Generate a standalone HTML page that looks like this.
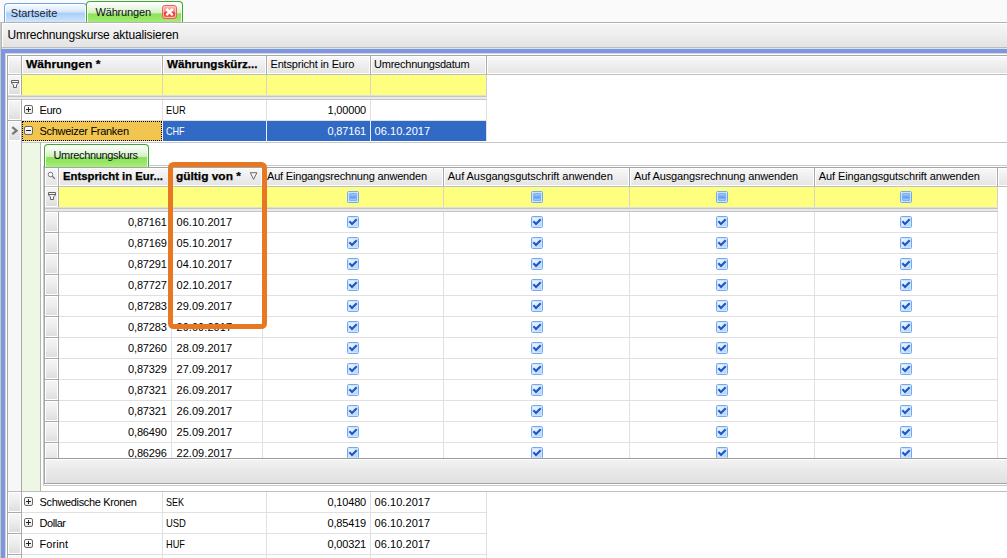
<!DOCTYPE html><html><head><meta charset="utf-8"><title>Währungen</title><style>
html,body{margin:0;padding:0}
body{width:1007px;height:558px;overflow:hidden;position:relative;background:#fff;font-family:"Liberation Sans",sans-serif;font-size:11px;color:#000}
div,span,svg{position:absolute;box-sizing:border-box}
.t{white-space:nowrap;line-height:16px;height:16px}
.b{font-weight:bold;-webkit-text-stroke:0.25px #000}
.big{font-size:12px}
.hd{background:linear-gradient(#f9f9f9 0%,#efefef 45%,#e4e4e4 100%);box-shadow:inset 0 0 0 1px #fff}
.ind{background:linear-gradient(#f6f6f6 0%,#ececec 50%,#dcdcdc 100%);box-shadow:inset 0 0 0 1px #fff}
.y{background:#ffff7f}
.ln{background:#e0e0e0}
.dk{background:#a9a9a9}
.ex{border:1px solid #6a6a6a;border-radius:2px;background:linear-gradient(#fff,#e8e8e8)}
.ex i{position:absolute;background:#222}
.cb{width:12px;height:12px;border:1px solid #70abf2;border-radius:1.5px;background:linear-gradient(135deg,#f6faff 0%,#dcebfd 45%,#a6cdf9 100%);box-shadow:inset 0 0 0 1px #cfe3fc}
</style></head><body>
<div class="" style="left:0px;top:0px;width:1007px;height:22px;background:#fafafa"></div>
<div class="" style="left:4px;top:3px;width:83px;height:20px;border:1px solid #6ea4e8;border-bottom:none;border-radius:4px 4px 0 0;background:linear-gradient(#f6faff 0%,#e3effc 30%,#cfe3fa 42%,#a9d0f8 50%,#b9d9f9 70%,#d6e9fc 100%);box-shadow:inset 1px 1px 0 rgba(255,255,255,.9),inset -1px 0 0 rgba(255,255,255,.9)"></div>
<span class="t " style="top:5px;left:10.8px;letter-spacing:0.003px;color:#1c2238;">Startseite</span>
<div class="" style="left:86px;top:1px;width:97px;height:22px;border:1px solid #3fa832;border-bottom:none;border-radius:4px 4px 0 0;background:linear-gradient(#ffffff 0%,#eef9e6 25%,#d3f0bf 52%,#8fe05a 57%,#98e868 80%,#a8f07e 100%);box-shadow:inset 1px 1px 0 rgba(255,255,255,.9),inset -1px 0 0 rgba(255,255,255,.8)"></div>
<span class="t " style="top:4px;left:95.5px;letter-spacing:-0.172px;color:#080c1c;">Währungen</span>
<svg style="left:162px;top:5px" width="15" height="14" viewBox="0 0 15 14"><defs><linearGradient id="rg" x1="0" y1="0" x2="0" y2="1"><stop offset="0" stop-color="#fbc4be"/><stop offset=".5" stop-color="#f4847c"/><stop offset=".56" stop-color="#e62a1c"/><stop offset="1" stop-color="#f6786c"/></linearGradient></defs><rect x=".5" y=".5" width="14" height="13" rx="2.5" fill="url(#rg)" stroke="#e8625a"/><rect x="1.5" y="1.5" width="12" height="11" rx="1.5" fill="none" stroke="#fbd0cb" stroke-opacity=".8"/><path d="M4.3 3.8 L10.7 10.2 M10.7 3.8 L4.3 10.2" stroke="#fff" stroke-width="2.4" stroke-linecap="butt"/></svg>
<div class="" style="left:1px;top:22px;width:1006px;height:27px;border-top:1px solid #b2b2b2;border-left:1px solid #b5b5b5;background:linear-gradient(#f6f6f6 0%,#ededed 50%,#e3e3e3 88%,#efefef 100%);box-shadow:inset 1px 1px 0 #fff"></div>
<div class="" style="left:0px;top:22px;width:1px;height:536px;background:#c9c9c9"></div>
<span class="t big" style="top:27px;left:7.5px;letter-spacing:-0.123px;">Umrechnungskurse aktualisieren</span>
<div class="" style="left:2px;top:47px;width:1005px;height:1px;background:#bcbcbc"></div>
<div class="" style="left:2px;top:48px;width:1005px;height:1px;background:#dfe2ee"></div>
<div class="" style="left:1px;top:49px;width:1006px;height:509px;background:#7b97e0"></div>
<div class="" style="left:5px;top:53px;width:1002px;height:505px;background:#d6d6d6"></div>
<div class="" style="left:6px;top:54px;width:1001px;height:504px;background:#fff"></div>
<div class="" style="left:7px;top:55px;width:1000px;height:503px;background:#a8a8a8"></div>
<div class="" style="left:8px;top:56px;width:999px;height:502px;background:#fff"></div>
<div class="hd" style="left:8px;top:56px;width:14px;height:18px;"></div>
<div class="hd" style="left:22px;top:56px;width:140px;height:18px;"></div>
<div class="hd" style="left:163px;top:56px;width:103px;height:18px;"></div>
<div class="hd" style="left:267px;top:56px;width:103px;height:18px;"></div>
<div class="hd" style="left:371px;top:56px;width:115px;height:18px;"></div>
<div class="hd" style="left:487px;top:56px;width:521px;height:18px;"></div>
<div class="dk" style="left:21px;top:56px;width:1px;height:19px;"></div>
<div class="dk" style="left:162px;top:56px;width:1px;height:19px;"></div>
<div class="dk" style="left:266px;top:56px;width:1px;height:19px;"></div>
<div class="dk" style="left:370px;top:56px;width:1px;height:19px;"></div>
<div class="dk" style="left:486px;top:56px;width:1px;height:19px;"></div>
<div class="" style="left:8px;top:74px;width:999px;height:1px;background:#bebebe"></div>
<span class="t b" style="top:56px;left:26px;transform:scaleX(1.0956);transform-origin:left center;">Währungen *</span>
<span class="t b" style="top:56px;left:167px;transform:scaleX(1.0581);transform-origin:left center;">Währungskürz...</span>
<span class="t " style="top:56px;left:270.5px;letter-spacing:-0.172px;">Entspricht in Euro</span>
<span class="t " style="top:56px;left:374px;letter-spacing:-0.230px;">Umrechnungsdatum</span>
<div class="ind" style="left:8px;top:75px;width:13px;height:20px;"></div>
<div class="dk" style="left:21px;top:75px;width:1px;height:20px;"></div>
<div class="y" style="left:22px;top:75px;width:464px;height:20px;"></div>
<div class="" style="left:162px;top:75px;width:1px;height:20px;background:#d6d6c4"></div>
<div class="" style="left:266px;top:75px;width:1px;height:20px;background:#d6d6c4"></div>
<div class="" style="left:370px;top:75px;width:1px;height:20px;background:#d6d6c4"></div>
<div class="" style="left:486px;top:75px;width:1px;height:20px;background:#d0d0d0"></div>
<svg style="left:11px;top:80px" width="8" height="9" viewBox="0 0 8 9"><path d="M.5 .5 H7.5 V3 L5.5 5 V7.5 H2.5 V5 L.5 3 Z" fill="#f6f6f6" stroke="#636363" stroke-width="1"/><path d="M1 2.5H7" stroke="#636363" stroke-width="1"/></svg>
<div class="" style="left:8px;top:95px;width:479px;height:5px;background:linear-gradient(#dedede 0,#dedede 1px,#c4c4c4 1px,#c4c4c4 2px,#eaeaea 2px,#eaeaea 4px,#c4c4c4 4px,#c4c4c4 5px)"></div>
<div class="ind" style="left:8px;top:100px;width:13px;height:20px;"></div>
<div class="dk" style="left:21px;top:99px;width:1px;height:22px;"></div>
<div class="dk" style="left:8px;top:120px;width:13px;height:1px;"></div>
<div class="ln" style="left:162px;top:100px;width:1px;height:21px;"></div>
<div class="ln" style="left:266px;top:100px;width:1px;height:21px;"></div>
<div class="ln" style="left:370px;top:100px;width:1px;height:21px;"></div>
<div class="ln" style="left:486px;top:100px;width:1px;height:21px;"></div>
<div class="ln" style="left:22px;top:120px;width:465px;height:1px;"></div>
<div class="ex" style="left:24px;top:105px;width:9px;height:9px"><i style="left:1px;top:3px;width:5px;height:1px"></i><i style="left:3px;top:1px;width:1px;height:5px"></i></div>
<span class="t " style="top:102px;left:39.5px;letter-spacing:-0.345px;">Euro</span>
<span class="t " style="top:102px;left:166px;transform:scaleX(0.8478);transform-origin:left center;">EUR</span>
<span class="t " style="top:102px;right:640.9789999999999px;letter-spacing:-0.179px;">1,00000</span>
<div class="ind" style="left:8px;top:121px;width:13px;height:20px;"></div>
<div class="dk" style="left:21px;top:120px;width:1px;height:22px;"></div>
<div class="dk" style="left:8px;top:141px;width:13px;height:1px;"></div>
<div class="" style="left:22px;top:121px;width:140px;height:20px;background:#f2c54f;border:1px dotted #000"></div>
<div class="" style="left:162px;top:121px;width:1px;height:20px;background:#f4f4f4"></div>
<div class="" style="left:163px;top:121px;width:323px;height:20px;background:#316ac5"></div>
<div class="" style="left:266px;top:121px;width:1px;height:20px;background:#e8eefc"></div>
<div class="" style="left:370px;top:121px;width:1px;height:20px;background:#e8eefc"></div>
<div class="ln" style="left:486px;top:121px;width:1px;height:20px;"></div>
<div class="ex" style="left:24px;top:126px;width:9px;height:9px"><i style="left:1px;top:3px;width:5px;height:1px"></i></div>
<span class="t " style="top:123px;left:39.5px;letter-spacing:-0.291px;">Schweizer Franken</span>
<span class="t " style="top:123px;left:166px;transform:scaleX(0.8261);transform-origin:left center;color:#fff;">CHF</span>
<span class="t " style="top:123px;right:640.9789999999999px;letter-spacing:-0.179px;color:#fff;">0,87161</span>
<span class="t " style="top:123px;left:374.6px;letter-spacing:0.049px;color:#fff;">06.10.2017</span>
<svg style="left:11px;top:126px" width="8" height="10" viewBox="0 0 8 10"><path d="M1.3 1.2 L5.6 4.7 L1.3 8.2" fill="none" stroke="#777" stroke-width="2.2"/></svg>
<div class="" style="left:8px;top:141px;width:13px;height:350px;background:#f7f7f7"></div>
<div class="dk" style="left:21px;top:141px;width:1px;height:350px;"></div>
<div class="" style="left:22px;top:141px;width:18px;height:350px;background:#eef7e3"></div>
<div class="" style="left:22px;top:142px;width:985px;height:1px;background:#c6c6c6"></div>
<div class="" style="left:40px;top:142px;width:1px;height:349px;background:#b4b4b4"></div>
<div class="" style="left:8px;top:491px;width:999px;height:1px;background:#bdbdbd"></div>
<div class="" style="left:44px;top:144px;width:105px;height:23px;border:1px solid #3fa832;border-bottom:none;border-radius:4px 4px 0 0;background:linear-gradient(#ffffff 0%,#eef9e6 25%,#d3f0bf 52%,#8fe05a 57%,#98e868 80%,#a8f07e 100%);box-shadow:inset 1px 1px 0 rgba(255,255,255,.9),inset -1px 0 0 rgba(255,255,255,.8)"></div>
<span class="t " style="top:146.5px;left:53.5px;letter-spacing:-0.341px;color:#080c1c;">Umrechnungskurs</span>
<div class="" style="left:149px;top:165px;width:858px;height:1px;background:#c9c9c9"></div>
<div class="" style="left:43px;top:166px;width:1px;height:320px;background:#c9c9c9"></div>
<div class="" style="left:43px;top:485px;width:964px;height:1px;background:#c9c9c9"></div>
<div class="" style="left:44px;top:167px;width:963px;height:317px;border:1px solid #a5a5a5;border-right:none;background:#fff"></div>
<div class="hd" style="left:45px;top:168px;width:13px;height:18px;"></div>
<div class="hd" style="left:59px;top:168px;width:112px;height:18px;"></div>
<div class="hd" style="left:172px;top:168px;width:90px;height:18px;"></div>
<div class="hd" style="left:263px;top:168px;width:180px;height:18px;"></div>
<div class="hd" style="left:444px;top:168px;width:185px;height:18px;"></div>
<div class="hd" style="left:630px;top:168px;width:184px;height:18px;"></div>
<div class="hd" style="left:815px;top:168px;width:182px;height:18px;"></div>
<div class="hd" style="left:998px;top:168px;width:10px;height:18px;"></div>
<div class="dk" style="left:58px;top:168px;width:1px;height:19px;"></div>
<div class="dk" style="left:171px;top:168px;width:1px;height:19px;"></div>
<div class="dk" style="left:262px;top:168px;width:1px;height:19px;"></div>
<div class="dk" style="left:443px;top:168px;width:1px;height:19px;"></div>
<div class="dk" style="left:629px;top:168px;width:1px;height:19px;"></div>
<div class="dk" style="left:814px;top:168px;width:1px;height:19px;"></div>
<div class="dk" style="left:997px;top:168px;width:1px;height:19px;"></div>
<div class="" style="left:45px;top:186px;width:962px;height:1px;background:#bebebe"></div>
<svg style="left:47px;top:171px" width="10" height="10" viewBox="0 0 10 10"><circle cx="3.5" cy="3.5" r="2.3" fill="#fbfbfb" stroke="#7a7a7a" stroke-width="1"/><path d="M5.2 5.2 L7.8 7.8" stroke="#7a7a7a" stroke-width="1.4"/></svg>
<span class="t b" style="top:168px;left:63px;transform:scaleX(1.0289);transform-origin:left center;">Entspricht in Eur...</span>
<span class="t b" style="top:168px;left:176px;transform:scaleX(1.0833);transform-origin:left center;">gültig von *</span>
<svg style="left:249px;top:172px" width="9" height="9" viewBox="0 0 9 9"><path d="M1.3 .7 H7.9 L4.6 7.4 Z" fill="#f4f4f4" stroke="#6c6c6c" stroke-width="1"/></svg>
<span class="t " style="top:168px;left:267px;letter-spacing:-0.183px;">Auf Eingangsrechnung anwenden</span>
<span class="t " style="top:168px;left:447.8px;letter-spacing:-0.045px;">Auf Ausgangsgutschrift anwenden</span>
<span class="t " style="top:168px;left:634px;letter-spacing:-0.121px;">Auf Ausgangsrechnung anwenden</span>
<span class="t " style="top:168px;left:818.8px;letter-spacing:-0.097px;">Auf Eingangsgutschrift anwenden</span>
<div class="ind" style="left:45px;top:187px;width:13px;height:20px;"></div>
<div class="dk" style="left:58px;top:187px;width:1px;height:20px;"></div>
<div class="y" style="left:59px;top:187px;width:938px;height:20px;"></div>
<div class="" style="left:171px;top:187px;width:1px;height:20px;background:#d6d6c4"></div>
<div class="" style="left:262px;top:187px;width:1px;height:20px;background:#d6d6c4"></div>
<div class="" style="left:443px;top:187px;width:1px;height:20px;background:#d6d6c4"></div>
<div class="" style="left:629px;top:187px;width:1px;height:20px;background:#d6d6c4"></div>
<div class="" style="left:814px;top:187px;width:1px;height:20px;background:#d6d6c4"></div>
<div class="" style="left:997px;top:187px;width:1px;height:20px;background:#d0d0d0"></div>
<svg style="left:48px;top:192px" width="8" height="9" viewBox="0 0 8 9"><path d="M.5 .5 H7.5 V3 L5.5 5 V7.5 H2.5 V5 L.5 3 Z" fill="#f6f6f6" stroke="#636363" stroke-width="1"/><path d="M1 2.5H7" stroke="#636363" stroke-width="1"/></svg>
<div class="cb" style="left:347px;top:191px"><div style="left:1px;top:1px;width:8px;height:8px;border-radius:1px;background:linear-gradient(#a4cbfa 0%,#6ea6f5 45%,#5f9bf3 55%,#a8cefb 100%);border:1px solid #7bb0f4"></div></div>
<div class="cb" style="left:531px;top:191px"><div style="left:1px;top:1px;width:8px;height:8px;border-radius:1px;background:linear-gradient(#a4cbfa 0%,#6ea6f5 45%,#5f9bf3 55%,#a8cefb 100%);border:1px solid #7bb0f4"></div></div>
<div class="cb" style="left:716px;top:191px"><div style="left:1px;top:1px;width:8px;height:8px;border-radius:1px;background:linear-gradient(#a4cbfa 0%,#6ea6f5 45%,#5f9bf3 55%,#a8cefb 100%);border:1px solid #7bb0f4"></div></div>
<div class="cb" style="left:900px;top:191px"><div style="left:1px;top:1px;width:8px;height:8px;border-radius:1px;background:linear-gradient(#a4cbfa 0%,#6ea6f5 45%,#5f9bf3 55%,#a8cefb 100%);border:1px solid #7bb0f4"></div></div>
<div class="" style="left:45px;top:207px;width:953px;height:5px;background:linear-gradient(#dedede 0,#dedede 1px,#c4c4c4 1px,#c4c4c4 2px,#eaeaea 2px,#eaeaea 4px,#c4c4c4 4px,#c4c4c4 5px)"></div>
<div style="left:45px;top:212px;width:962px;height:246px;overflow:hidden">
<div class="ind" style="left:0px;top:0px;width:13px;height:20px;"></div>
<div class="dk" style="left:13px;top:-1px;width:1px;height:22px;"></div>
<div class="dk" style="left:0px;top:20px;width:13px;height:1px;"></div>
<div class="ln" style="left:14px;top:20px;width:939px;height:1px;"></div>
<div class="ln" style="left:126px;top:0px;width:1px;height:21px;"></div>
<div class="ln" style="left:217px;top:0px;width:1px;height:21px;"></div>
<div class="ln" style="left:398px;top:0px;width:1px;height:21px;"></div>
<div class="ln" style="left:584px;top:0px;width:1px;height:21px;"></div>
<div class="ln" style="left:769px;top:0px;width:1px;height:21px;"></div>
<div class="ln" style="left:952px;top:0px;width:1px;height:21px;"></div>
<div class="ind" style="left:0px;top:21px;width:13px;height:20px;"></div>
<div class="dk" style="left:13px;top:20px;width:1px;height:22px;"></div>
<div class="dk" style="left:0px;top:41px;width:13px;height:1px;"></div>
<div class="ln" style="left:14px;top:41px;width:939px;height:1px;"></div>
<div class="ln" style="left:126px;top:21px;width:1px;height:21px;"></div>
<div class="ln" style="left:217px;top:21px;width:1px;height:21px;"></div>
<div class="ln" style="left:398px;top:21px;width:1px;height:21px;"></div>
<div class="ln" style="left:584px;top:21px;width:1px;height:21px;"></div>
<div class="ln" style="left:769px;top:21px;width:1px;height:21px;"></div>
<div class="ln" style="left:952px;top:21px;width:1px;height:21px;"></div>
<div class="ind" style="left:0px;top:42px;width:13px;height:20px;"></div>
<div class="dk" style="left:13px;top:41px;width:1px;height:22px;"></div>
<div class="dk" style="left:0px;top:62px;width:13px;height:1px;"></div>
<div class="ln" style="left:14px;top:62px;width:939px;height:1px;"></div>
<div class="ln" style="left:126px;top:42px;width:1px;height:21px;"></div>
<div class="ln" style="left:217px;top:42px;width:1px;height:21px;"></div>
<div class="ln" style="left:398px;top:42px;width:1px;height:21px;"></div>
<div class="ln" style="left:584px;top:42px;width:1px;height:21px;"></div>
<div class="ln" style="left:769px;top:42px;width:1px;height:21px;"></div>
<div class="ln" style="left:952px;top:42px;width:1px;height:21px;"></div>
<div class="ind" style="left:0px;top:63px;width:13px;height:20px;"></div>
<div class="dk" style="left:13px;top:62px;width:1px;height:22px;"></div>
<div class="dk" style="left:0px;top:83px;width:13px;height:1px;"></div>
<div class="ln" style="left:14px;top:83px;width:939px;height:1px;"></div>
<div class="ln" style="left:126px;top:63px;width:1px;height:21px;"></div>
<div class="ln" style="left:217px;top:63px;width:1px;height:21px;"></div>
<div class="ln" style="left:398px;top:63px;width:1px;height:21px;"></div>
<div class="ln" style="left:584px;top:63px;width:1px;height:21px;"></div>
<div class="ln" style="left:769px;top:63px;width:1px;height:21px;"></div>
<div class="ln" style="left:952px;top:63px;width:1px;height:21px;"></div>
<div class="ind" style="left:0px;top:84px;width:13px;height:20px;"></div>
<div class="dk" style="left:13px;top:83px;width:1px;height:22px;"></div>
<div class="dk" style="left:0px;top:104px;width:13px;height:1px;"></div>
<div class="ln" style="left:14px;top:104px;width:939px;height:1px;"></div>
<div class="ln" style="left:126px;top:84px;width:1px;height:21px;"></div>
<div class="ln" style="left:217px;top:84px;width:1px;height:21px;"></div>
<div class="ln" style="left:398px;top:84px;width:1px;height:21px;"></div>
<div class="ln" style="left:584px;top:84px;width:1px;height:21px;"></div>
<div class="ln" style="left:769px;top:84px;width:1px;height:21px;"></div>
<div class="ln" style="left:952px;top:84px;width:1px;height:21px;"></div>
<div class="ind" style="left:0px;top:105px;width:13px;height:20px;"></div>
<div class="dk" style="left:13px;top:104px;width:1px;height:22px;"></div>
<div class="dk" style="left:0px;top:125px;width:13px;height:1px;"></div>
<div class="ln" style="left:14px;top:125px;width:939px;height:1px;"></div>
<div class="ln" style="left:126px;top:105px;width:1px;height:21px;"></div>
<div class="ln" style="left:217px;top:105px;width:1px;height:21px;"></div>
<div class="ln" style="left:398px;top:105px;width:1px;height:21px;"></div>
<div class="ln" style="left:584px;top:105px;width:1px;height:21px;"></div>
<div class="ln" style="left:769px;top:105px;width:1px;height:21px;"></div>
<div class="ln" style="left:952px;top:105px;width:1px;height:21px;"></div>
<div class="ind" style="left:0px;top:126px;width:13px;height:20px;"></div>
<div class="dk" style="left:13px;top:125px;width:1px;height:22px;"></div>
<div class="dk" style="left:0px;top:146px;width:13px;height:1px;"></div>
<div class="ln" style="left:14px;top:146px;width:939px;height:1px;"></div>
<div class="ln" style="left:126px;top:126px;width:1px;height:21px;"></div>
<div class="ln" style="left:217px;top:126px;width:1px;height:21px;"></div>
<div class="ln" style="left:398px;top:126px;width:1px;height:21px;"></div>
<div class="ln" style="left:584px;top:126px;width:1px;height:21px;"></div>
<div class="ln" style="left:769px;top:126px;width:1px;height:21px;"></div>
<div class="ln" style="left:952px;top:126px;width:1px;height:21px;"></div>
<div class="ind" style="left:0px;top:147px;width:13px;height:20px;"></div>
<div class="dk" style="left:13px;top:146px;width:1px;height:22px;"></div>
<div class="dk" style="left:0px;top:167px;width:13px;height:1px;"></div>
<div class="ln" style="left:14px;top:167px;width:939px;height:1px;"></div>
<div class="ln" style="left:126px;top:147px;width:1px;height:21px;"></div>
<div class="ln" style="left:217px;top:147px;width:1px;height:21px;"></div>
<div class="ln" style="left:398px;top:147px;width:1px;height:21px;"></div>
<div class="ln" style="left:584px;top:147px;width:1px;height:21px;"></div>
<div class="ln" style="left:769px;top:147px;width:1px;height:21px;"></div>
<div class="ln" style="left:952px;top:147px;width:1px;height:21px;"></div>
<div class="ind" style="left:0px;top:168px;width:13px;height:20px;"></div>
<div class="dk" style="left:13px;top:167px;width:1px;height:22px;"></div>
<div class="dk" style="left:0px;top:188px;width:13px;height:1px;"></div>
<div class="ln" style="left:14px;top:188px;width:939px;height:1px;"></div>
<div class="ln" style="left:126px;top:168px;width:1px;height:21px;"></div>
<div class="ln" style="left:217px;top:168px;width:1px;height:21px;"></div>
<div class="ln" style="left:398px;top:168px;width:1px;height:21px;"></div>
<div class="ln" style="left:584px;top:168px;width:1px;height:21px;"></div>
<div class="ln" style="left:769px;top:168px;width:1px;height:21px;"></div>
<div class="ln" style="left:952px;top:168px;width:1px;height:21px;"></div>
<div class="ind" style="left:0px;top:189px;width:13px;height:20px;"></div>
<div class="dk" style="left:13px;top:188px;width:1px;height:22px;"></div>
<div class="dk" style="left:0px;top:209px;width:13px;height:1px;"></div>
<div class="ln" style="left:14px;top:209px;width:939px;height:1px;"></div>
<div class="ln" style="left:126px;top:189px;width:1px;height:21px;"></div>
<div class="ln" style="left:217px;top:189px;width:1px;height:21px;"></div>
<div class="ln" style="left:398px;top:189px;width:1px;height:21px;"></div>
<div class="ln" style="left:584px;top:189px;width:1px;height:21px;"></div>
<div class="ln" style="left:769px;top:189px;width:1px;height:21px;"></div>
<div class="ln" style="left:952px;top:189px;width:1px;height:21px;"></div>
<div class="ind" style="left:0px;top:210px;width:13px;height:20px;"></div>
<div class="dk" style="left:13px;top:209px;width:1px;height:22px;"></div>
<div class="dk" style="left:0px;top:230px;width:13px;height:1px;"></div>
<div class="ln" style="left:14px;top:230px;width:939px;height:1px;"></div>
<div class="ln" style="left:126px;top:210px;width:1px;height:21px;"></div>
<div class="ln" style="left:217px;top:210px;width:1px;height:21px;"></div>
<div class="ln" style="left:398px;top:210px;width:1px;height:21px;"></div>
<div class="ln" style="left:584px;top:210px;width:1px;height:21px;"></div>
<div class="ln" style="left:769px;top:210px;width:1px;height:21px;"></div>
<div class="ln" style="left:952px;top:210px;width:1px;height:21px;"></div>
<div class="ind" style="left:0px;top:231px;width:13px;height:20px;"></div>
<div class="dk" style="left:13px;top:230px;width:1px;height:22px;"></div>
<div class="dk" style="left:0px;top:251px;width:13px;height:1px;"></div>
<div class="ln" style="left:14px;top:251px;width:939px;height:1px;"></div>
<div class="ln" style="left:126px;top:231px;width:1px;height:21px;"></div>
<div class="ln" style="left:217px;top:231px;width:1px;height:21px;"></div>
<div class="ln" style="left:398px;top:231px;width:1px;height:21px;"></div>
<div class="ln" style="left:584px;top:231px;width:1px;height:21px;"></div>
<div class="ln" style="left:769px;top:231px;width:1px;height:21px;"></div>
<div class="ln" style="left:952px;top:231px;width:1px;height:21px;"></div>
</div>
<div style="left:0;top:0;width:1007px;height:458px;overflow:hidden">
<span class="t " style="top:214px;right:840.379px;letter-spacing:-0.179px;">0,87161</span>
<span class="t " style="top:214px;left:176.5px;letter-spacing:0.049px;">06.10.2017</span>
<div class="cb" style="left:347px;top:216px"><svg style="left:0;top:0" width="10" height="10" viewBox="0 0 10 10"><path d="M1.4 4.3 L4 6.9 L8.7 2.2" fill="none" stroke="#1e56c8" stroke-width="2.1"/></svg></div>
<div class="cb" style="left:531px;top:216px"><svg style="left:0;top:0" width="10" height="10" viewBox="0 0 10 10"><path d="M1.4 4.3 L4 6.9 L8.7 2.2" fill="none" stroke="#1e56c8" stroke-width="2.1"/></svg></div>
<div class="cb" style="left:716px;top:216px"><svg style="left:0;top:0" width="10" height="10" viewBox="0 0 10 10"><path d="M1.4 4.3 L4 6.9 L8.7 2.2" fill="none" stroke="#1e56c8" stroke-width="2.1"/></svg></div>
<div class="cb" style="left:900px;top:216px"><svg style="left:0;top:0" width="10" height="10" viewBox="0 0 10 10"><path d="M1.4 4.3 L4 6.9 L8.7 2.2" fill="none" stroke="#1e56c8" stroke-width="2.1"/></svg></div>
<span class="t " style="top:235px;right:840.379px;letter-spacing:-0.179px;">0,87169</span>
<span class="t " style="top:235px;left:176.5px;letter-spacing:0.049px;">05.10.2017</span>
<div class="cb" style="left:347px;top:237px"><svg style="left:0;top:0" width="10" height="10" viewBox="0 0 10 10"><path d="M1.4 4.3 L4 6.9 L8.7 2.2" fill="none" stroke="#1e56c8" stroke-width="2.1"/></svg></div>
<div class="cb" style="left:531px;top:237px"><svg style="left:0;top:0" width="10" height="10" viewBox="0 0 10 10"><path d="M1.4 4.3 L4 6.9 L8.7 2.2" fill="none" stroke="#1e56c8" stroke-width="2.1"/></svg></div>
<div class="cb" style="left:716px;top:237px"><svg style="left:0;top:0" width="10" height="10" viewBox="0 0 10 10"><path d="M1.4 4.3 L4 6.9 L8.7 2.2" fill="none" stroke="#1e56c8" stroke-width="2.1"/></svg></div>
<div class="cb" style="left:900px;top:237px"><svg style="left:0;top:0" width="10" height="10" viewBox="0 0 10 10"><path d="M1.4 4.3 L4 6.9 L8.7 2.2" fill="none" stroke="#1e56c8" stroke-width="2.1"/></svg></div>
<span class="t " style="top:256px;right:840.379px;letter-spacing:-0.179px;">0,87291</span>
<span class="t " style="top:256px;left:176.5px;letter-spacing:0.049px;">04.10.2017</span>
<div class="cb" style="left:347px;top:258px"><svg style="left:0;top:0" width="10" height="10" viewBox="0 0 10 10"><path d="M1.4 4.3 L4 6.9 L8.7 2.2" fill="none" stroke="#1e56c8" stroke-width="2.1"/></svg></div>
<div class="cb" style="left:531px;top:258px"><svg style="left:0;top:0" width="10" height="10" viewBox="0 0 10 10"><path d="M1.4 4.3 L4 6.9 L8.7 2.2" fill="none" stroke="#1e56c8" stroke-width="2.1"/></svg></div>
<div class="cb" style="left:716px;top:258px"><svg style="left:0;top:0" width="10" height="10" viewBox="0 0 10 10"><path d="M1.4 4.3 L4 6.9 L8.7 2.2" fill="none" stroke="#1e56c8" stroke-width="2.1"/></svg></div>
<div class="cb" style="left:900px;top:258px"><svg style="left:0;top:0" width="10" height="10" viewBox="0 0 10 10"><path d="M1.4 4.3 L4 6.9 L8.7 2.2" fill="none" stroke="#1e56c8" stroke-width="2.1"/></svg></div>
<span class="t " style="top:277px;right:840.379px;letter-spacing:-0.179px;">0,87727</span>
<span class="t " style="top:277px;left:176.5px;letter-spacing:0.049px;">02.10.2017</span>
<div class="cb" style="left:347px;top:279px"><svg style="left:0;top:0" width="10" height="10" viewBox="0 0 10 10"><path d="M1.4 4.3 L4 6.9 L8.7 2.2" fill="none" stroke="#1e56c8" stroke-width="2.1"/></svg></div>
<div class="cb" style="left:531px;top:279px"><svg style="left:0;top:0" width="10" height="10" viewBox="0 0 10 10"><path d="M1.4 4.3 L4 6.9 L8.7 2.2" fill="none" stroke="#1e56c8" stroke-width="2.1"/></svg></div>
<div class="cb" style="left:716px;top:279px"><svg style="left:0;top:0" width="10" height="10" viewBox="0 0 10 10"><path d="M1.4 4.3 L4 6.9 L8.7 2.2" fill="none" stroke="#1e56c8" stroke-width="2.1"/></svg></div>
<div class="cb" style="left:900px;top:279px"><svg style="left:0;top:0" width="10" height="10" viewBox="0 0 10 10"><path d="M1.4 4.3 L4 6.9 L8.7 2.2" fill="none" stroke="#1e56c8" stroke-width="2.1"/></svg></div>
<span class="t " style="top:298px;right:840.379px;letter-spacing:-0.179px;">0,87283</span>
<span class="t " style="top:298px;left:176.5px;letter-spacing:0.049px;">29.09.2017</span>
<div class="cb" style="left:347px;top:300px"><svg style="left:0;top:0" width="10" height="10" viewBox="0 0 10 10"><path d="M1.4 4.3 L4 6.9 L8.7 2.2" fill="none" stroke="#1e56c8" stroke-width="2.1"/></svg></div>
<div class="cb" style="left:531px;top:300px"><svg style="left:0;top:0" width="10" height="10" viewBox="0 0 10 10"><path d="M1.4 4.3 L4 6.9 L8.7 2.2" fill="none" stroke="#1e56c8" stroke-width="2.1"/></svg></div>
<div class="cb" style="left:716px;top:300px"><svg style="left:0;top:0" width="10" height="10" viewBox="0 0 10 10"><path d="M1.4 4.3 L4 6.9 L8.7 2.2" fill="none" stroke="#1e56c8" stroke-width="2.1"/></svg></div>
<div class="cb" style="left:900px;top:300px"><svg style="left:0;top:0" width="10" height="10" viewBox="0 0 10 10"><path d="M1.4 4.3 L4 6.9 L8.7 2.2" fill="none" stroke="#1e56c8" stroke-width="2.1"/></svg></div>
<span class="t " style="top:319px;right:840.379px;letter-spacing:-0.179px;">0,87283</span>
<span class="t " style="top:319px;left:176.5px;letter-spacing:0.049px;">29.09.2017</span>
<div class="cb" style="left:347px;top:321px"><svg style="left:0;top:0" width="10" height="10" viewBox="0 0 10 10"><path d="M1.4 4.3 L4 6.9 L8.7 2.2" fill="none" stroke="#1e56c8" stroke-width="2.1"/></svg></div>
<div class="cb" style="left:531px;top:321px"><svg style="left:0;top:0" width="10" height="10" viewBox="0 0 10 10"><path d="M1.4 4.3 L4 6.9 L8.7 2.2" fill="none" stroke="#1e56c8" stroke-width="2.1"/></svg></div>
<div class="cb" style="left:716px;top:321px"><svg style="left:0;top:0" width="10" height="10" viewBox="0 0 10 10"><path d="M1.4 4.3 L4 6.9 L8.7 2.2" fill="none" stroke="#1e56c8" stroke-width="2.1"/></svg></div>
<div class="cb" style="left:900px;top:321px"><svg style="left:0;top:0" width="10" height="10" viewBox="0 0 10 10"><path d="M1.4 4.3 L4 6.9 L8.7 2.2" fill="none" stroke="#1e56c8" stroke-width="2.1"/></svg></div>
<span class="t " style="top:340px;right:840.379px;letter-spacing:-0.179px;">0,87260</span>
<span class="t " style="top:340px;left:176.5px;letter-spacing:0.049px;">28.09.2017</span>
<div class="cb" style="left:347px;top:342px"><svg style="left:0;top:0" width="10" height="10" viewBox="0 0 10 10"><path d="M1.4 4.3 L4 6.9 L8.7 2.2" fill="none" stroke="#1e56c8" stroke-width="2.1"/></svg></div>
<div class="cb" style="left:531px;top:342px"><svg style="left:0;top:0" width="10" height="10" viewBox="0 0 10 10"><path d="M1.4 4.3 L4 6.9 L8.7 2.2" fill="none" stroke="#1e56c8" stroke-width="2.1"/></svg></div>
<div class="cb" style="left:716px;top:342px"><svg style="left:0;top:0" width="10" height="10" viewBox="0 0 10 10"><path d="M1.4 4.3 L4 6.9 L8.7 2.2" fill="none" stroke="#1e56c8" stroke-width="2.1"/></svg></div>
<div class="cb" style="left:900px;top:342px"><svg style="left:0;top:0" width="10" height="10" viewBox="0 0 10 10"><path d="M1.4 4.3 L4 6.9 L8.7 2.2" fill="none" stroke="#1e56c8" stroke-width="2.1"/></svg></div>
<span class="t " style="top:361px;right:840.379px;letter-spacing:-0.179px;">0,87329</span>
<span class="t " style="top:361px;left:176.5px;letter-spacing:0.049px;">27.09.2017</span>
<div class="cb" style="left:347px;top:363px"><svg style="left:0;top:0" width="10" height="10" viewBox="0 0 10 10"><path d="M1.4 4.3 L4 6.9 L8.7 2.2" fill="none" stroke="#1e56c8" stroke-width="2.1"/></svg></div>
<div class="cb" style="left:531px;top:363px"><svg style="left:0;top:0" width="10" height="10" viewBox="0 0 10 10"><path d="M1.4 4.3 L4 6.9 L8.7 2.2" fill="none" stroke="#1e56c8" stroke-width="2.1"/></svg></div>
<div class="cb" style="left:716px;top:363px"><svg style="left:0;top:0" width="10" height="10" viewBox="0 0 10 10"><path d="M1.4 4.3 L4 6.9 L8.7 2.2" fill="none" stroke="#1e56c8" stroke-width="2.1"/></svg></div>
<div class="cb" style="left:900px;top:363px"><svg style="left:0;top:0" width="10" height="10" viewBox="0 0 10 10"><path d="M1.4 4.3 L4 6.9 L8.7 2.2" fill="none" stroke="#1e56c8" stroke-width="2.1"/></svg></div>
<span class="t " style="top:382px;right:840.379px;letter-spacing:-0.179px;">0,87321</span>
<span class="t " style="top:382px;left:176.5px;letter-spacing:0.049px;">26.09.2017</span>
<div class="cb" style="left:347px;top:384px"><svg style="left:0;top:0" width="10" height="10" viewBox="0 0 10 10"><path d="M1.4 4.3 L4 6.9 L8.7 2.2" fill="none" stroke="#1e56c8" stroke-width="2.1"/></svg></div>
<div class="cb" style="left:531px;top:384px"><svg style="left:0;top:0" width="10" height="10" viewBox="0 0 10 10"><path d="M1.4 4.3 L4 6.9 L8.7 2.2" fill="none" stroke="#1e56c8" stroke-width="2.1"/></svg></div>
<div class="cb" style="left:716px;top:384px"><svg style="left:0;top:0" width="10" height="10" viewBox="0 0 10 10"><path d="M1.4 4.3 L4 6.9 L8.7 2.2" fill="none" stroke="#1e56c8" stroke-width="2.1"/></svg></div>
<div class="cb" style="left:900px;top:384px"><svg style="left:0;top:0" width="10" height="10" viewBox="0 0 10 10"><path d="M1.4 4.3 L4 6.9 L8.7 2.2" fill="none" stroke="#1e56c8" stroke-width="2.1"/></svg></div>
<span class="t " style="top:403px;right:840.379px;letter-spacing:-0.179px;">0,87321</span>
<span class="t " style="top:403px;left:176.5px;letter-spacing:0.049px;">26.09.2017</span>
<div class="cb" style="left:347px;top:405px"><svg style="left:0;top:0" width="10" height="10" viewBox="0 0 10 10"><path d="M1.4 4.3 L4 6.9 L8.7 2.2" fill="none" stroke="#1e56c8" stroke-width="2.1"/></svg></div>
<div class="cb" style="left:531px;top:405px"><svg style="left:0;top:0" width="10" height="10" viewBox="0 0 10 10"><path d="M1.4 4.3 L4 6.9 L8.7 2.2" fill="none" stroke="#1e56c8" stroke-width="2.1"/></svg></div>
<div class="cb" style="left:716px;top:405px"><svg style="left:0;top:0" width="10" height="10" viewBox="0 0 10 10"><path d="M1.4 4.3 L4 6.9 L8.7 2.2" fill="none" stroke="#1e56c8" stroke-width="2.1"/></svg></div>
<div class="cb" style="left:900px;top:405px"><svg style="left:0;top:0" width="10" height="10" viewBox="0 0 10 10"><path d="M1.4 4.3 L4 6.9 L8.7 2.2" fill="none" stroke="#1e56c8" stroke-width="2.1"/></svg></div>
<span class="t " style="top:424px;right:840.379px;letter-spacing:-0.179px;">0,86490</span>
<span class="t " style="top:424px;left:176.5px;letter-spacing:0.049px;">25.09.2017</span>
<div class="cb" style="left:347px;top:426px"><svg style="left:0;top:0" width="10" height="10" viewBox="0 0 10 10"><path d="M1.4 4.3 L4 6.9 L8.7 2.2" fill="none" stroke="#1e56c8" stroke-width="2.1"/></svg></div>
<div class="cb" style="left:531px;top:426px"><svg style="left:0;top:0" width="10" height="10" viewBox="0 0 10 10"><path d="M1.4 4.3 L4 6.9 L8.7 2.2" fill="none" stroke="#1e56c8" stroke-width="2.1"/></svg></div>
<div class="cb" style="left:716px;top:426px"><svg style="left:0;top:0" width="10" height="10" viewBox="0 0 10 10"><path d="M1.4 4.3 L4 6.9 L8.7 2.2" fill="none" stroke="#1e56c8" stroke-width="2.1"/></svg></div>
<div class="cb" style="left:900px;top:426px"><svg style="left:0;top:0" width="10" height="10" viewBox="0 0 10 10"><path d="M1.4 4.3 L4 6.9 L8.7 2.2" fill="none" stroke="#1e56c8" stroke-width="2.1"/></svg></div>
<span class="t " style="top:445px;right:840.379px;letter-spacing:-0.179px;">0,86296</span>
<span class="t " style="top:445px;left:176.5px;letter-spacing:0.049px;">22.09.2017</span>
<div class="cb" style="left:347px;top:447px"><svg style="left:0;top:0" width="10" height="10" viewBox="0 0 10 10"><path d="M1.4 4.3 L4 6.9 L8.7 2.2" fill="none" stroke="#1e56c8" stroke-width="2.1"/></svg></div>
<div class="cb" style="left:531px;top:447px"><svg style="left:0;top:0" width="10" height="10" viewBox="0 0 10 10"><path d="M1.4 4.3 L4 6.9 L8.7 2.2" fill="none" stroke="#1e56c8" stroke-width="2.1"/></svg></div>
<div class="cb" style="left:716px;top:447px"><svg style="left:0;top:0" width="10" height="10" viewBox="0 0 10 10"><path d="M1.4 4.3 L4 6.9 L8.7 2.2" fill="none" stroke="#1e56c8" stroke-width="2.1"/></svg></div>
<div class="cb" style="left:900px;top:447px"><svg style="left:0;top:0" width="10" height="10" viewBox="0 0 10 10"><path d="M1.4 4.3 L4 6.9 L8.7 2.2" fill="none" stroke="#1e56c8" stroke-width="2.1"/></svg></div>
</div>
<div class="" style="left:45px;top:458px;width:962px;height:1px;background:#9c9c9c"></div>
<div class="" style="left:45px;top:459px;width:962px;height:24px;background:linear-gradient(#f3f3f3,#e9e9e9 50%,#e0e0e0);box-shadow:inset 1px 1px 0 #fff"></div>
<div style="left:167.8px;top:161.8px;width:99.1px;height:167.7px;border:5px solid #e87722;border-radius:5.5px"></div>
<div class="ind" style="left:8px;top:492px;width:13px;height:20px;"></div>
<div class="dk" style="left:21px;top:491px;width:1px;height:22px;"></div>
<div class="dk" style="left:8px;top:512px;width:13px;height:1px;"></div>
<div class="ln" style="left:162px;top:492px;width:1px;height:21px;"></div>
<div class="ln" style="left:266px;top:492px;width:1px;height:21px;"></div>
<div class="ln" style="left:370px;top:492px;width:1px;height:21px;"></div>
<div class="ln" style="left:486px;top:492px;width:1px;height:21px;"></div>
<div class="ln" style="left:22px;top:512px;width:465px;height:1px;"></div>
<div class="ex" style="left:24px;top:497px;width:9px;height:9px"><i style="left:1px;top:3px;width:5px;height:1px"></i><i style="left:3px;top:1px;width:1px;height:5px"></i></div>
<span class="t " style="top:494px;left:39.5px;letter-spacing:-0.344px;">Schwedische Kronen</span>
<span class="t " style="top:494px;left:166px;transform:scaleX(0.8182);transform-origin:left center;">SEK</span>
<span class="t " style="top:494px;right:640.9789999999999px;letter-spacing:-0.179px;">0,10480</span>
<span class="t " style="top:494px;left:374.6px;letter-spacing:0.049px;">06.10.2017</span>
<div class="ind" style="left:8px;top:513px;width:13px;height:20px;"></div>
<div class="dk" style="left:21px;top:512px;width:1px;height:22px;"></div>
<div class="dk" style="left:8px;top:533px;width:13px;height:1px;"></div>
<div class="ln" style="left:162px;top:513px;width:1px;height:21px;"></div>
<div class="ln" style="left:266px;top:513px;width:1px;height:21px;"></div>
<div class="ln" style="left:370px;top:513px;width:1px;height:21px;"></div>
<div class="ln" style="left:486px;top:513px;width:1px;height:21px;"></div>
<div class="ln" style="left:22px;top:533px;width:465px;height:1px;"></div>
<div class="ex" style="left:24px;top:518px;width:9px;height:9px"><i style="left:1px;top:3px;width:5px;height:1px"></i><i style="left:3px;top:1px;width:1px;height:5px"></i></div>
<span class="t " style="top:515px;left:39.5px;letter-spacing:-0.448px;">Dollar</span>
<span class="t " style="top:515px;left:166px;transform:scaleX(0.8565);transform-origin:left center;">USD</span>
<span class="t " style="top:515px;right:640.9789999999999px;letter-spacing:-0.179px;">0,85419</span>
<span class="t " style="top:515px;left:374.6px;letter-spacing:0.049px;">06.10.2017</span>
<div class="ind" style="left:8px;top:534px;width:13px;height:20px;"></div>
<div class="dk" style="left:21px;top:533px;width:1px;height:22px;"></div>
<div class="dk" style="left:8px;top:554px;width:13px;height:1px;"></div>
<div class="ln" style="left:162px;top:534px;width:1px;height:21px;"></div>
<div class="ln" style="left:266px;top:534px;width:1px;height:21px;"></div>
<div class="ln" style="left:370px;top:534px;width:1px;height:21px;"></div>
<div class="ln" style="left:486px;top:534px;width:1px;height:21px;"></div>
<div class="ln" style="left:22px;top:554px;width:465px;height:1px;"></div>
<div class="ex" style="left:24px;top:539px;width:9px;height:9px"><i style="left:1px;top:3px;width:5px;height:1px"></i><i style="left:3px;top:1px;width:1px;height:5px"></i></div>
<span class="t " style="top:536px;left:39.5px;letter-spacing:0.076px;">Forint</span>
<span class="t " style="top:536px;left:166px;transform:scaleX(0.8348);transform-origin:left center;">HUF</span>
<span class="t " style="top:536px;right:640.9789999999999px;letter-spacing:-0.179px;">0,00321</span>
<span class="t " style="top:536px;left:374.6px;letter-spacing:0.049px;">06.10.2017</span>
<div class="ind" style="left:8px;top:555px;width:13px;height:20px;"></div>
<div class="dk" style="left:21px;top:554px;width:1px;height:22px;"></div>
<div class="dk" style="left:8px;top:575px;width:13px;height:1px;"></div>
<div class="ln" style="left:162px;top:555px;width:1px;height:21px;"></div>
<div class="ln" style="left:266px;top:555px;width:1px;height:21px;"></div>
<div class="ln" style="left:370px;top:555px;width:1px;height:21px;"></div>
<div class="ln" style="left:486px;top:555px;width:1px;height:21px;"></div>
<div class="ln" style="left:22px;top:575px;width:465px;height:1px;"></div>
</body></html>
